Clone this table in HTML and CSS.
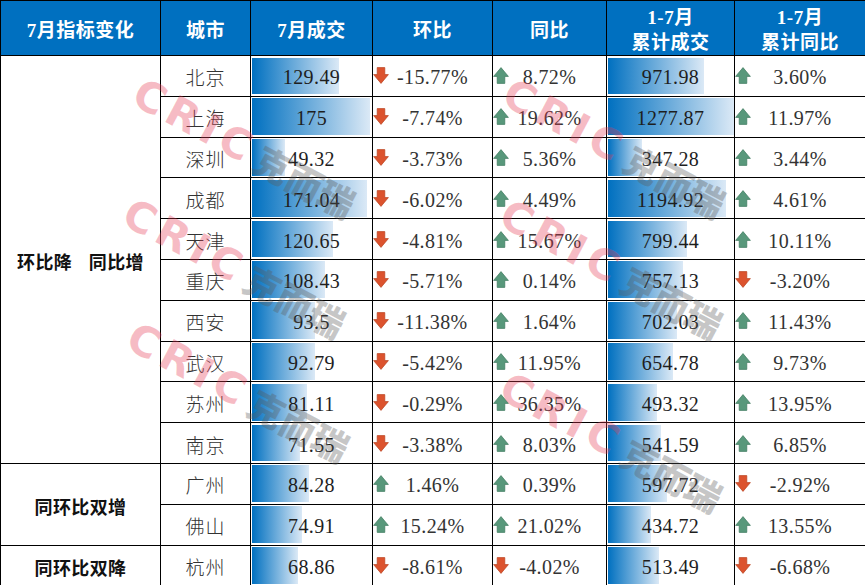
FILE: index.html
```html
<!DOCTYPE html>
<html lang="zh-CN">
<head>
<meta charset="utf-8">
<title>7月指标变化</title>
<link rel="stylesheet" href="styles.css">
</head>
<body>
<svg class="defs" width="0" height="0" aria-hidden="true">
  <symbol id="dn" viewBox="0 0 16 17"><path d="M4.2 0.6 H11.8 V7.6 H15.4 L8 16.4 L0.6 7.6 H4.2 Z" fill="#dc532e" stroke="#b9421f" stroke-width="0.7" stroke-linejoin="round"/></symbol>
  <symbol id="up" viewBox="0 0 16 17"><path d="M4.2 16.4 H11.8 V9.4 H15.4 L8 0.6 L0.6 9.4 H4.2 Z" fill="#58987b" stroke="#3f7a5f" stroke-width="0.7" stroke-linejoin="round"/></symbol>
</svg>
<div class="page">
<table class="tbl">
  <colgroup>
    <col class="w1"><col class="w2"><col class="w3"><col class="w4"><col class="w5"><col class="w6"><col class="w7">
  </colgroup>
  <thead>
    <tr><th>7月指标变化</th><th>城市</th><th>7月成交</th><th>环比</th><th>同比</th><th>1-7月<br>累计成交</th><th>1-7月<br>累计同比</th></tr>
  </thead>
  <tbody>
    <tr>
      <td rowspan="10" class="grp"><span class="sp">环比降 同比增</span></td>
      <td class="city">北京</td>
      <td class="bar" style="--w:87px">129.49</td>
      <td><div class="pc"><svg class="arr"><use href="#dn"/></svg><span>-15.77%</span></div></td>
      <td><div class="pc"><svg class="arr"><use href="#up"/></svg><span>8.72%</span></div></td>
      <td class="bar" style="--w:96px">971.98</td>
      <td><div class="pc"><svg class="arr"><use href="#up"/></svg><span>3.60%</span></div></td>
    </tr>
    <tr>
      <td class="city">上海</td>
      <td class="bar" style="--w:118px">175</td>
      <td><div class="pc"><svg class="arr"><use href="#dn"/></svg><span>-7.74%</span></div></td>
      <td><div class="pc"><svg class="arr"><use href="#up"/></svg><span>19.62%</span></div></td>
      <td class="bar" style="--w:126px">1277.87</td>
      <td><div class="pc"><svg class="arr"><use href="#up"/></svg><span>11.97%</span></div></td>
    </tr>
    <tr>
      <td class="city">深圳</td>
      <td class="bar" style="--w:33px">49.32</td>
      <td><div class="pc"><svg class="arr"><use href="#dn"/></svg><span>-3.73%</span></div></td>
      <td><div class="pc"><svg class="arr"><use href="#up"/></svg><span>5.36%</span></div></td>
      <td class="bar" style="--w:34px">347.28</td>
      <td><div class="pc"><svg class="arr"><use href="#up"/></svg><span>3.44%</span></div></td>
    </tr>
    <tr>
      <td class="city">成都</td>
      <td class="bar" style="--w:115px">171.04</td>
      <td><div class="pc"><svg class="arr"><use href="#dn"/></svg><span>-6.02%</span></div></td>
      <td><div class="pc"><svg class="arr"><use href="#up"/></svg><span>4.49%</span></div></td>
      <td class="bar" style="--w:118px">1194.92</td>
      <td><div class="pc"><svg class="arr"><use href="#up"/></svg><span>4.61%</span></div></td>
    </tr>
    <tr>
      <td class="city">天津</td>
      <td class="bar" style="--w:81px">120.65</td>
      <td><div class="pc"><svg class="arr"><use href="#dn"/></svg><span>-4.81%</span></div></td>
      <td><div class="pc"><svg class="arr"><use href="#up"/></svg><span>15.67%</span></div></td>
      <td class="bar" style="--w:79px">799.44</td>
      <td><div class="pc"><svg class="arr"><use href="#up"/></svg><span>10.11%</span></div></td>
    </tr>
    <tr>
      <td class="city">重庆</td>
      <td class="bar" style="--w:73px">108.43</td>
      <td><div class="pc"><svg class="arr"><use href="#dn"/></svg><span>-5.71%</span></div></td>
      <td><div class="pc"><svg class="arr"><use href="#up"/></svg><span>0.14%</span></div></td>
      <td class="bar" style="--w:75px">757.13</td>
      <td><div class="pc"><svg class="arr"><use href="#dn"/></svg><span>-3.20%</span></div></td>
    </tr>
    <tr>
      <td class="city">西安</td>
      <td class="bar" style="--w:63px">93.5</td>
      <td><div class="pc"><svg class="arr"><use href="#dn"/></svg><span>-11.38%</span></div></td>
      <td><div class="pc"><svg class="arr"><use href="#up"/></svg><span>1.64%</span></div></td>
      <td class="bar" style="--w:69px">702.03</td>
      <td><div class="pc"><svg class="arr"><use href="#up"/></svg><span>11.43%</span></div></td>
    </tr>
    <tr>
      <td class="city">武汉</td>
      <td class="bar" style="--w:63px">92.79</td>
      <td><div class="pc"><svg class="arr"><use href="#dn"/></svg><span>-5.42%</span></div></td>
      <td><div class="pc"><svg class="arr"><use href="#up"/></svg><span>11.95%</span></div></td>
      <td class="bar" style="--w:65px">654.78</td>
      <td><div class="pc"><svg class="arr"><use href="#up"/></svg><span>9.73%</span></div></td>
    </tr>
    <tr>
      <td class="city">苏州</td>
      <td class="bar" style="--w:55px">81.11</td>
      <td><div class="pc"><svg class="arr"><use href="#dn"/></svg><span>-0.29%</span></div></td>
      <td><div class="pc"><svg class="arr"><use href="#up"/></svg><span>36.35%</span></div></td>
      <td class="bar" style="--w:49px">493.32</td>
      <td><div class="pc"><svg class="arr"><use href="#up"/></svg><span>13.95%</span></div></td>
    </tr>
    <tr>
      <td class="city">南京</td>
      <td class="bar" style="--w:48px">71.55</td>
      <td><div class="pc"><svg class="arr"><use href="#dn"/></svg><span>-3.38%</span></div></td>
      <td><div class="pc"><svg class="arr"><use href="#up"/></svg><span>8.03%</span></div></td>
      <td class="bar" style="--w:53px">541.59</td>
      <td><div class="pc"><svg class="arr"><use href="#up"/></svg><span>6.85%</span></div></td>
    </tr>
    <tr>
      <td rowspan="2" class="grp">同环比双增</td>
      <td class="city">广州</td>
      <td class="bar" style="--w:57px">84.28</td>
      <td><div class="pc"><svg class="arr"><use href="#up"/></svg><span>1.46%</span></div></td>
      <td><div class="pc"><svg class="arr"><use href="#up"/></svg><span>0.39%</span></div></td>
      <td class="bar" style="--w:59px">597.72</td>
      <td><div class="pc"><svg class="arr"><use href="#dn"/></svg><span>-2.92%</span></div></td>
    </tr>
    <tr>
      <td class="city">佛山</td>
      <td class="bar" style="--w:50px">74.91</td>
      <td><div class="pc"><svg class="arr"><use href="#up"/></svg><span>15.24%</span></div></td>
      <td><div class="pc"><svg class="arr"><use href="#up"/></svg><span>21.02%</span></div></td>
      <td class="bar" style="--w:43px">434.72</td>
      <td><div class="pc"><svg class="arr"><use href="#up"/></svg><span>13.55%</span></div></td>
    </tr>
    <tr>
      <td class="grp">同环比双降</td>
      <td class="city">杭州</td>
      <td class="bar" style="--w:46px">68.86</td>
      <td><div class="pc"><svg class="arr"><use href="#dn"/></svg><span>-8.61%</span></div></td>
      <td><div class="pc"><svg class="arr"><use href="#dn"/></svg><span>-4.02%</span></div></td>
      <td class="bar" style="--w:51px">513.49</td>
      <td><div class="pc"><svg class="arr"><use href="#dn"/></svg><span>-6.68%</span></div></td>
    </tr>
  </tbody>
</table>
<div class="wm-layer" aria-hidden="true">
  <div class="wm wm-l1"><span class="cric">CRIC</span><span class="kr">克而瑞</span></div>
  <div class="wm wm-l2"><span class="cric">CRIC</span><span class="kr">克而瑞</span></div>
  <div class="wm wm-l3"><span class="cric">CRIC</span><span class="kr">克而瑞</span></div>
  <div class="wm wm-r1"><span class="cric">CRIC</span><span class="kr">克而瑞</span></div>
  <div class="wm wm-r2"><span class="cric">CRIC</span><span class="kr">克而瑞</span></div>
  <div class="wm wm-r3"><span class="cric">CRIC</span><span class="kr">克而瑞</span></div>
</div>
</div>
</body>
</html>
```

FILE: styles.css
```css
html, body {
  margin: 0;
  padding: 0;
  background: #ffffff;
}

.defs {
  position: absolute;
  width: 0;
  height: 0;
}

.page {
  position: relative;
  width: 865px;
  height: 585px;
  overflow: hidden;
}

.tbl {
  border-collapse: collapse;
  table-layout: fixed;
  width: 865px;
  font-family: "Liberation Serif", "Noto Sans CJK SC", serif;
}

.w1 { width: 160px; }
.w2 { width: 90px; }
.w3 { width: 122px; }
.w4 { width: 120px; }
.w5 { width: 114px; }
.w6 { width: 128px; }
.w7 { width: 131px; }

.tbl th {
  background: #0070c0;
  color: #ffffff;
  font-family: "Liberation Serif", "Noto Sans CJK SC", sans-serif;
  font-weight: 700;
  font-size: 19px;
  line-height: 25px;
  letter-spacing: 0.5px;
  border: 1px solid #000000;
  height: 49px;
  padding: 4px 0 0;
  text-align: center;
  vertical-align: middle;
}

.tbl td {
  border: 1px solid #000000;
  padding: 3px 0 0;
  height: 36.8px;
  text-align: center;
  vertical-align: middle;
  font-size: 20px;
  letter-spacing: 0.4px;
  color: #222222;
  line-height: 24px;
}

.tbl td.grp {
  font-family: "Noto Sans CJK SC", sans-serif;
  font-weight: 700;
  font-size: 18px;
  color: #111111;
  letter-spacing: 0.4px;
}

.sp {
  word-spacing: 12px;
}

.tbl td.city {
  font-family: "Noto Sans CJK SC", sans-serif;
  font-weight: 300;
  font-size: 19px;
  color: #333333;
  letter-spacing: 1px;
}

.tbl td.bar {
  background-image: linear-gradient(90deg, #0070c0 0%, #dbe9f6 100%);
  background-repeat: no-repeat;
  background-size: var(--w) calc(100% - 4px);
  background-position: 1px 2px;
  background-origin: border-box;
  color: #1e1e1e;
}

.pc {
  display: grid;
  grid-template-columns: 18px 1fr 18px;
  align-items: center;
  color: #333333;
}

.pc span {
  text-align: center;
}

.arr {
  display: block;
  width: 16px;
  height: 17px;
  margin-top: -3px;
}

.wm-layer {
  position: absolute;
  left: 0;
  top: 0;
  width: 865px;
  height: 585px;
  pointer-events: none;
}

.wm {
  position: absolute;
  display: flex;
  align-items: center;
  gap: 4px;
  transform: rotate(28deg);
  transform-origin: 0 0;
  white-space: nowrap;
}

.cric {
  font-family: "DejaVu Sans", sans-serif;
  font-weight: 700;
  font-size: 42px;
  letter-spacing: 6px;
  line-height: 42px;
  color: rgba(230, 60, 85, 0.34);
}

.kr {
  font-family: "Noto Sans CJK SC", sans-serif;
  font-weight: 900;
  font-size: 36px;
  line-height: 42px;
  color: rgba(90, 90, 90, 0.34);
}

.wm-l1 { left: 146px; top: 72px; }
.wm-l2 { left: 136px; top: 192px; }
.wm-l3 { left: 140px; top: 316px; }
.wm-r1 { left: 516px; top: 72px; }
.wm-r2 { left: 513px; top: 193px; }
.wm-r3 { left: 513px; top: 366px; }
```
